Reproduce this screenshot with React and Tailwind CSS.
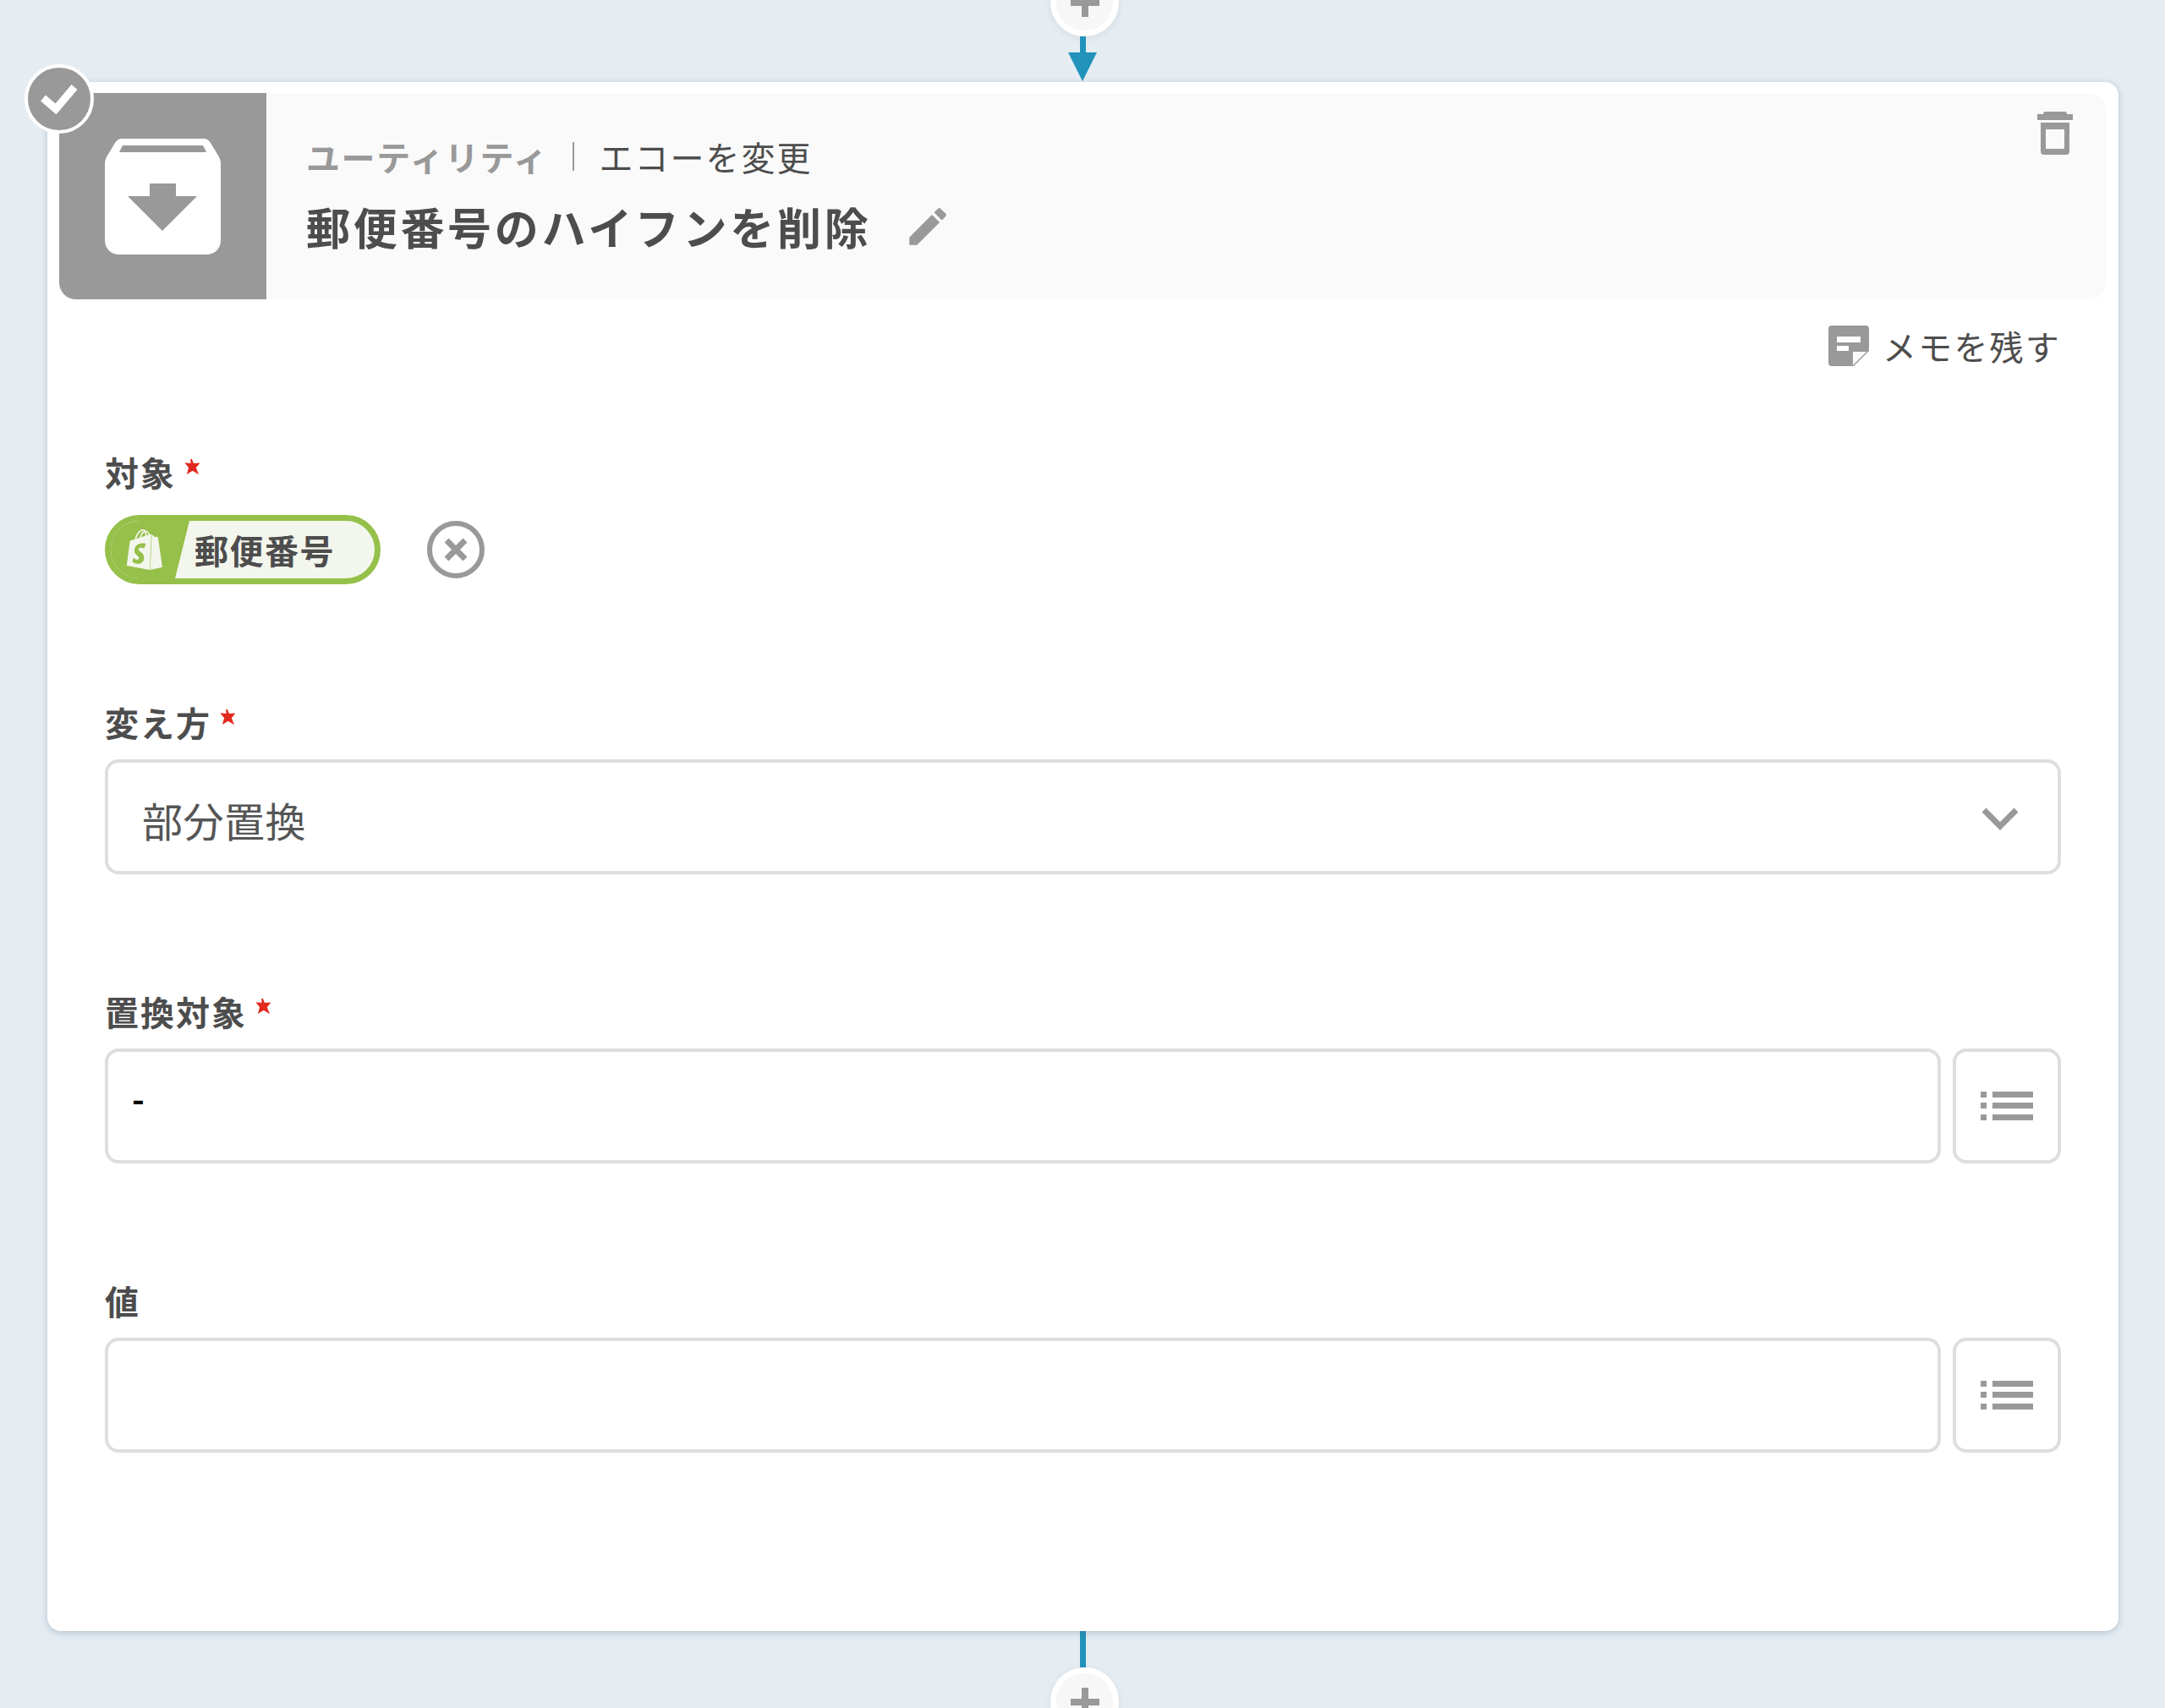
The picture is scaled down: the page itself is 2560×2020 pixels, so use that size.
import React from "react";
import { MdEdit } from "react-icons/md";
import { SiShopify } from "react-icons/si";

const FONT = "font-['Noto_Sans_CJK_JP','Noto_Sans',sans-serif]";

function PlusButton({ className = "" }) {
  return (
    <div
      className={`w-[81px] h-[81px] shrink-0 rounded-full bg-[#f7f7f7] border-[7px] border-white shadow-[0_2px_8px_rgba(0,0,0,0.08)] flex items-center justify-center ${className}`}
    >
      <svg width="34" height="34" viewBox="0 0 34 34" fill="#999">
        <rect x="13" y="0" width="8" height="34" />
        <rect x="0" y="13" width="34" height="8" />
      </svg>
    </div>
  );
}

function Label({ text, required }) {
  return (
    <div className="flex items-start h-[40px] mb-[22px] text-[40px] leading-[36px] font-bold text-[#4d4d4d]">
      <span className="tracking-[2px]">{text}</span>
      {required && (
        <svg className="ml-[8px] mt-[2px]" width="20" height="20" viewBox="0 0 18 18" fill="#e3291f" stroke="#e3291f" strokeWidth="1.5">
          <path d="M9 1l2.2 5.2 5.6-.5-3.4 4.2 2.2 5.6-5-3-5 3 1.6-5.6-3.4-4.2 5.6.5z" />
        </svg>
      )}
    </div>
  );
}

function ListButton() {
  return (
    <div className="w-[128px] h-[136px] shrink-0 ml-[14px] rounded-[16px] border-[4px] border-[#dedede] flex items-center justify-center">
      <svg width="62" height="34" viewBox="0 0 62 34" fill="#999">
        <rect x="0" y="0" width="7" height="7" />
        <rect x="14" y="0" width="48" height="7" />
        <rect x="0" y="13" width="7" height="7" />
        <rect x="14" y="13" width="48" height="7" />
        <rect x="0" y="27" width="7" height="7" />
        <rect x="14" y="27" width="48" height="7" />
      </svg>
    </div>
  );
}

function InputRow({ value }) {
  return (
    <div className="flex">
      <div className="flex-1 h-[136px] rounded-[16px] border-[4px] border-[#dedede] pl-[28px] pt-[29px] text-[40px] leading-[50px] font-bold text-black">
        {value}
      </div>
      <ListButton />
    </div>
  );
}

export default function App() {
  return (
    <div className={`w-[2560px] h-[2020px] overflow-hidden bg-[#e5edf3] ${FONT}`}>
      {/* Top connector */}
      <div className="flow-root h-[97px] pl-[1277px]">
        <PlusButton className="-mt-[38px] -ml-[35px]" />
        <div className="w-[7px] h-[19px] bg-[#2193bb]" />
        <svg className="-ml-[14px]" width="34" height="34" viewBox="0 0 34 34" fill="#2193bb">
          <path d="M0 0h34L17 34z" />
        </svg>
      </div>

      {/* Card */}
      <div className="relative ml-[56px] w-[2449px] h-[1832px] rounded-[16px] bg-white shadow-[0_2px_8px_rgba(60,80,100,0.28)] pt-[13px]">
        {/* Status badge */}
        <div className="absolute -left-[27px] -top-[21px] w-[82px] h-[82px] rounded-full bg-[#999] border-[4px] border-white flex items-center justify-center">
          <svg width="46" height="36" viewBox="0 0 46 36" fill="none" stroke="white" strokeWidth="9">
            <path d="M4 17l15 13L41 4" />
          </svg>
        </div>

        {/* Header */}
        <div className="ml-[14px] w-[2421px] h-[244px] flex bg-[#fafafa] rounded-[20px]">
          <div className="w-[245px] h-[244px] shrink-0 bg-[#999] rounded-bl-[20px] flex items-center justify-center">
            <svg width="137" height="137" viewBox="0 0 137 137">
              <path
                fill="white"
                d="M20 0h97c4 0 6 2 8 5l9 15c2 3 3 6 3 10v90c0 10-7 17-17 17H17c-10 0-17-7-17-17V30c0-4 1-7 3-10l9-15c2-3 4-5 8-5z"
              />
              <path fill="#999" d="M21 8h95l4 8H17z" />
              <path fill="#999" d="M53 53h31v15h25L68 109 27 68h26z" />
            </svg>
          </div>
          <div className="flex-1 pl-[47px] pt-[52px]">
            <div className="flex items-center h-[46px] text-[40px] leading-[46px]">
              <span className="font-bold text-[#999] tracking-[1.6px]">ユーティリティ</span>
              <span className="w-[2px] h-[34px] bg-[#999] ml-[29px] mr-[29px]" />
              <span className="text-[#4d4d4d] tracking-[2px]">エコーを変更</span>
            </div>
            <div className="flex items-center mt-[30px] h-[60px]">
              <span className="text-[52px] leading-[60px] font-bold tracking-[3.7px] text-[#4d4d4d]">
                郵便番号のハイフンを削除
              </span>
              <MdEdit className="ml-[38px] text-[#999]" size={58} />
            </div>
          </div>
          <div className="w-[82px] pt-[22px]">
            <svg width="42" height="51" viewBox="0 0 42 51" fill="#999">
              <path d="M7 3q0-3 3-3h22q3 0 3 3h7v7H0V3z" />
              <path
                fillRule="evenodd"
                d="M4 13h34v34q0 4-4 4H8q-4 0-4-4zM10 21v23h22V21z"
              />
            </svg>
          </div>
        </div>

        {/* Form */}
        <div className="pl-[68px] pr-[68px]">
          <div className="flex justify-end items-center h-[48px] mt-[31px]">
            <svg width="48" height="48" viewBox="0 0 48 48">
              <path fill="#999" d="M4 0h40q4 0 4 4v26L30 48H4q-4 0-4-4V4q0-4 4-4z" />
              <path fill="white" d="M10 13h28v7H10zM10 24h14v6H10z" />
              <path fill="#fafafa" d="M29 31h16L29 47z" />
            </svg>
            <span className="ml-[16px] text-[40px] leading-[48px] tracking-[2.2px] text-[#4d4d4d]">メモを残す</span>
          </div>

          <div className="mt-[107px]">
            <Label text="対象" required />
            <div className="flex items-center mt-[29px]">
              <div className="h-[82px] w-[326px] rounded-full border-[7px] border-[#95c04a] bg-[#f3f6ec] flex overflow-hidden">
                <div className="w-[76px] bg-[#95c04a] flex items-center justify-center pl-[4px]">
                  <SiShopify className="text-[#f3f6ec]" size={48} />
                </div>
                <div className="w-[17px] self-stretch bg-[#95c04a] [clip-path:polygon(0_0,100%_0,0_100%)]" />
                <span className="ml-[6px] text-[40px] leading-[68px] font-bold tracking-[1.5px] text-[#4d4d4d]">郵便番号</span>
              </div>
              <svg className="ml-[55px]" width="68" height="68" viewBox="0 0 68 68" fill="none" stroke="#999">
                <circle cx="34" cy="34" r="31" strokeWidth="6" />
                <path d="M23 23l22 22M45 23L23 45" strokeWidth="7" />
              </svg>
            </div>
          </div>

          <div className="mt-[145px]">
            <Label text="変え方" required />
            <div className="h-[136px] rounded-[16px] border-[4px] border-[#dedede] pl-[40px] pr-[47px] flex items-center justify-between">
              <span className="text-[48px] leading-[60px] mt-[6px] tracking-[0.5px] text-[#555]">部分置換</span>
              <svg className="mt-[6px]" width="42" height="28" viewBox="0 0 42 28" fill="none" stroke="#999" strokeWidth="7">
                <path d="M2 3l19 19L40 3" />
              </svg>
            </div>
          </div>

          <div className="mt-[144px]">
            <Label text="置換対象" required />
            <InputRow value="-" />
          </div>

          <div className="mt-[144px]">
            <Label text="値" />
            <InputRow />
          </div>
        </div>
      </div>

      {/* Bottom connector */}
      <div className="pl-[1277px]">
        <div className="w-[7px] h-[43px] bg-[#2193bb]" />
        <PlusButton className="-ml-[35px]" />
      </div>
    </div>
  );
}
